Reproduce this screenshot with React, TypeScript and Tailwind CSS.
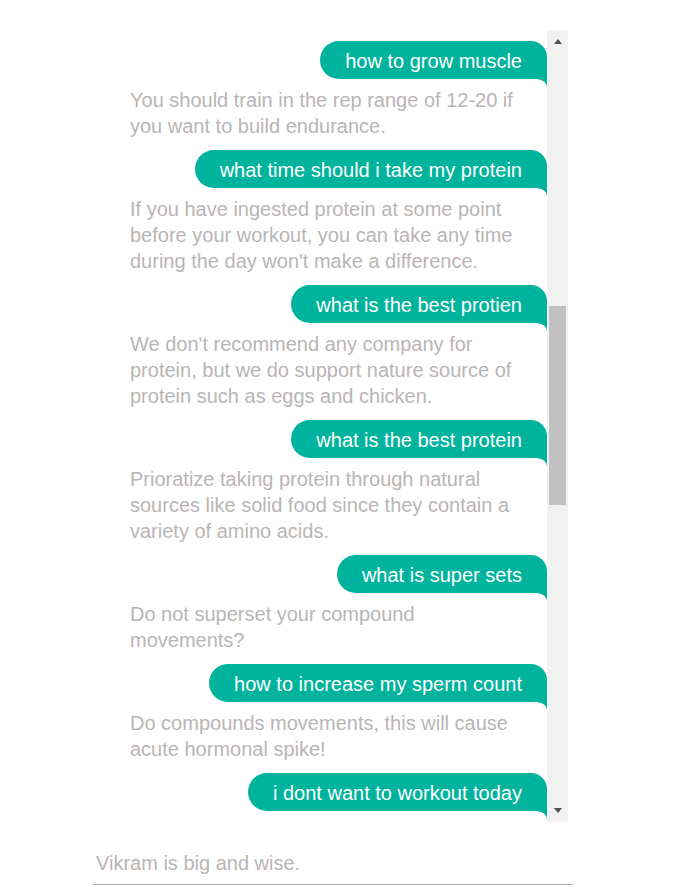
import React from "react";

const convo: { q: string; a: string[] }[] = [
  { q: "how to grow muscle", a: ["You should train in the rep range of 12-20 if", "you want to build endurance."] },
  { q: "what time should i take my protein", a: ["If you have ingested protein at some point", "before your workout, you can take any time", "during the day won't make a difference."] },
  { q: "what is the best protien", a: ["We don't recommend any company for", "protein, but we do support nature source of", "protein such as eggs and chicken."] },
  { q: "what is the best protein", a: ["Prioratize taking protein through natural", "sources like solid food since they contain a", "variety of amino acids."] },
  { q: "what is super sets", a: ["Do not superset your compound", "movements?"] },
  { q: "how to increase my sperm count", a: ["Do compounds movements, this will cause", "acute hormonal spike!"] },
  { q: "i dont want to workout today", a: [] },
];

function Bubble({ text }: { text: string }) {
  return (
    <div className="flex justify-end">
      <div className="relative">
        <div className="h-[38px] flex items-center pt-[2px] px-[25px] bg-[#00b39c] text-white text-[20px] rounded-l-[19px] rounded-tr-[16px] whitespace-nowrap">
          {text}
        </div>
        <svg className="absolute right-0 top-[38px]" width="10" height="8" viewBox="0 0 10 8">
          <path d="M0 0 H10 V8 Q9 1 0 0 Z" fill="#00b39c" />
        </svg>
      </div>
    </div>
  );
}

export default function App() {
  return (
    <div className="w-[675px] h-[895px] bg-white relative" style={{ fontFamily: '"Liberation Sans", Arial, sans-serif' }}>
      <div className="pt-[30px] pl-[93px] flex">
        <div className="w-[454px] h-[792px] overflow-hidden pt-[11px]">
          {convo.map((c, i) => (
            <div key={i}>
              <Bubble text={c.q} />
              {c.a.length > 0 && (
                <div className="mt-[8px] mb-[11px] pl-[37px] text-[20px] leading-[26px] text-[#b9b5b5]">
                  {c.a.map((l, j) => (
                    <div key={j} className="whitespace-nowrap">{l}</div>
                  ))}
                </div>
              )}
            </div>
          ))}
        </div>
        <div className="w-[21px] h-[792px] bg-[#f1f1f1] flex flex-col items-center">
          <div className="h-[22px] flex items-center justify-center">
            <div className="w-0 h-0 border-l-[4px] border-r-[4px] border-b-[5px] border-l-transparent border-r-transparent border-b-[#505050]" />
          </div>
          <div className="mt-[254px] w-[17px] h-[199px] bg-[#c1c1c1]" />
          <div className="flex-1" />
          <div className="h-[24px] flex items-center justify-center">
            <div className="w-0 h-0 border-l-[4px] border-r-[4px] border-t-[5px] border-l-transparent border-r-transparent border-t-[#505050]" />
          </div>
        </div>
      </div>
      <div className="ml-[93px] mt-[28px] w-[480px] border-b border-[#a9a9a9] pb-[8px] pl-[3px] text-[20px] leading-[26px] text-[#b9b5b5]">
        Vikram is big and wise.
      </div>
    </div>
  );
}
